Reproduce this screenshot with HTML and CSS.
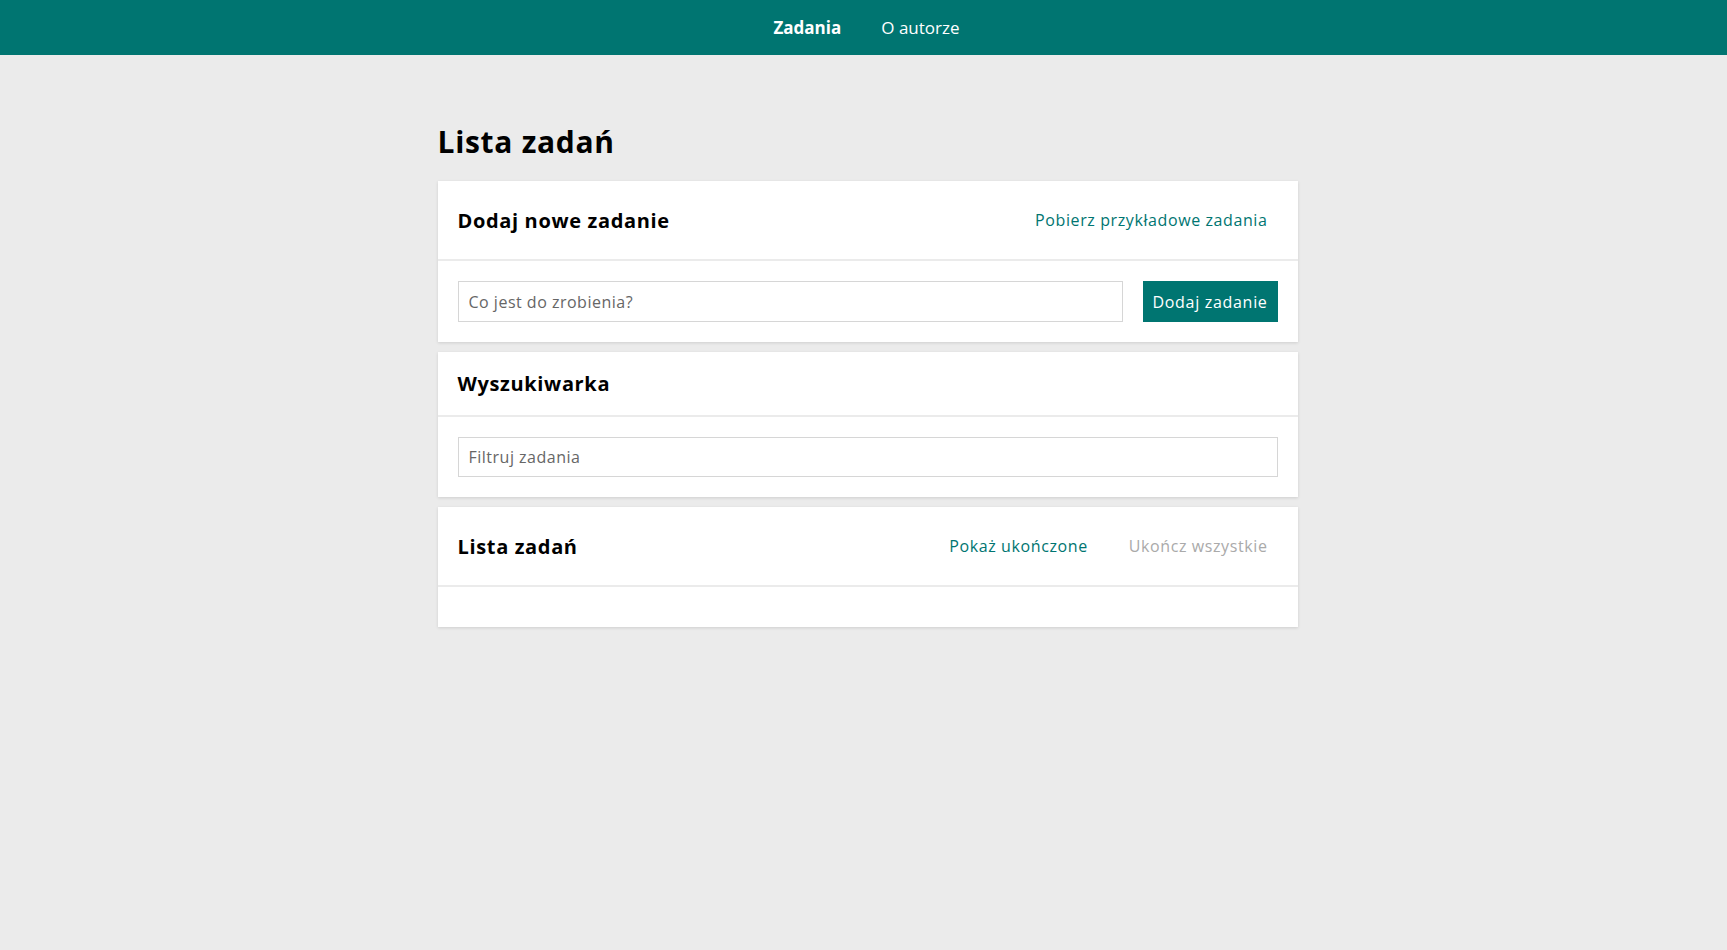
FILE: index.html
```html
<!DOCTYPE html>
<html lang="pl">
<head>
<meta charset="utf-8">
<title>Lista zadań</title>
<link rel="stylesheet" href="styles.css">
</head>
<body>
<nav class="nav">
  <a class="nav-link active" href="#">Zadania</a>
  <a class="nav-link" href="#">O autorze</a>
</nav>
<main class="main">
  <h1 class="page-title">Lista zadań</h1>
  <section class="card">
    <header class="card-header">
      <h2 class="card-title">Dodaj nowe zadanie</h2>
      <div class="card-actions">
        <a class="link" href="#">Pobierz przykładowe zadania</a>
      </div>
    </header>
    <div class="card-body row">
      <input class="input grow" type="text" placeholder="Co jest do zrobienia?">
      <button class="button">Dodaj zadanie</button>
    </div>
  </section>
  <section class="card">
    <header class="card-header">
      <h2 class="card-title">Wyszukiwarka</h2>
    </header>
    <div class="card-body">
      <input class="input full" type="text" placeholder="Filtruj zadania">
    </div>
  </section>
  <section class="card">
    <header class="card-header">
      <h2 class="card-title">Lista zadań</h2>
      <div class="card-actions">
        <a class="link" href="#">Pokaż ukończone</a>
        <a class="link disabled" href="#">Ukończ wszystkie</a>
      </div>
    </header>
    <div class="card-body"></div>
  </section>
</main>
</body>
</html>
```

FILE: styles.css
```css
* { box-sizing: border-box; }
html, body { margin: 0; padding: 0; }
body {
  background: #ebebeb;
  font-family: "Open Sans", "DejaVu Sans", sans-serif;
  color: #000;
  min-height: 950px;
}
.nav {
  height: 55px;
  background: #007571;
  display: flex;
  justify-content: center;
  align-items: center;
  padding-left: 6px;
}
.nav-link {
  color: #fff;
  text-decoration: none;
  font-size: 17px;
  padding: 0 20px;
  line-height: 53px;
}
.nav-link.active { font-weight: 700; }
.main {
  width: 860px;
  margin-left: calc(50% - 426px);
  padding-top: 63px;
}
.page-title {
  margin: 0 0 16px;
  font-size: 30px;
  line-height: 47px;
  font-weight: 700;
  letter-spacing: 0.7px;
}
.card {
  background: #fff;
  box-shadow: 0 1px 3px rgba(0,0,0,0.12);
  margin-bottom: 10px;
}
.card-header {
  display: flex;
  align-items: center;
  justify-content: space-between;
  padding: 20px;
  border-bottom: 2px solid #ebebeb;
}
.card-title {
  margin: 0;
  font-size: 20px;
  line-height: 23px;
  font-weight: 700;
  letter-spacing: 0.65px;
}
.card-actions { display: flex; gap: 21px; }
.link {
  color: #007571;
  text-decoration: none;
  font-size: 16px;
  line-height: 18px;
  padding: 10px;
  letter-spacing: 0.6px;
}
.link.disabled { color: #aaa; }
.card-body { padding: 20px; min-height: 40px; }
.row { display: flex; gap: 20px; }
.grow { flex: 1; }
.full { width: 100%; display: block; }
.input {
  height: 41px;
  border: 1px solid #d6d6d6;
  padding: 0 10px;
  font-family: inherit;
  font-size: 16px;
  letter-spacing: 0.5px;
  color: #333;
  outline: none;
  border-radius: 0;
  background: #fff;
}
.card-body .input.full { height: 40px; }
.input::placeholder { color: #666; }
.button {
  height: 41px;
  background: #007571;
  color: #fff;
  border: none;
  font-family: inherit;
  font-size: 16px;
  letter-spacing: 0.7px;
  padding: 0;
  width: 135px;
  white-space: nowrap;
  border-radius: 0;
}
```
